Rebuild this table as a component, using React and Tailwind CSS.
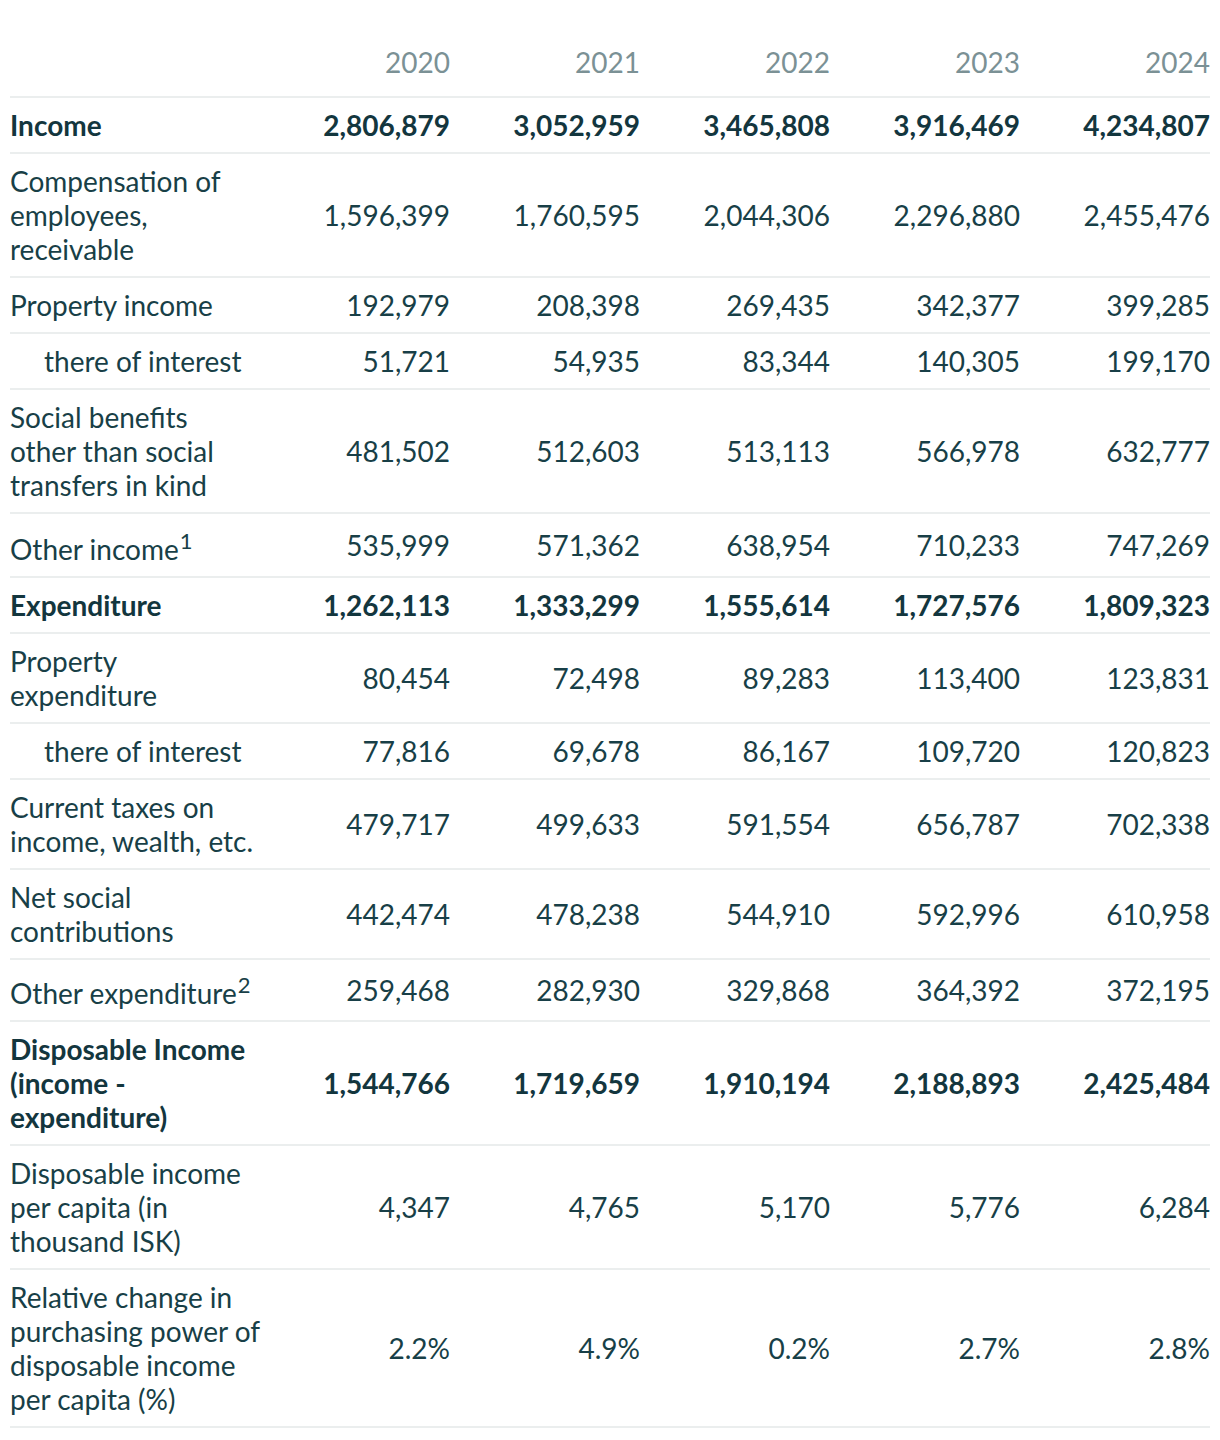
import React from 'react';

const years = ['2020', '2021', '2022', '2023', '2024'];

const rows = [
  { label: 'Income', bold: true, values: ['2,806,879', '3,052,959', '3,465,808', '3,916,469', '4,234,807'] },
  { label: 'Compensation of employees, receivable', values: ['1,596,399', '1,760,595', '2,044,306', '2,296,880', '2,455,476'] },
  { label: 'Property income', values: ['192,979', '208,398', '269,435', '342,377', '399,285'] },
  { label: 'there of interest', indent: true, values: ['51,721', '54,935', '83,344', '140,305', '199,170'] },
  { label: 'Social benefits other than social transfers in kind', values: ['481,502', '512,603', '513,113', '566,978', '632,777'] },
  { label: 'Other income', note: '1', top: 'pt-[18px]', values: ['535,999', '571,362', '638,954', '710,233', '747,269'] },
  { label: 'Expenditure', bold: true, values: ['1,262,113', '1,333,299', '1,555,614', '1,727,576', '1,809,323'] },
  { label: 'Property expenditure', values: ['80,454', '72,498', '89,283', '113,400', '123,831'] },
  { label: 'there of interest', indent: true, values: ['77,816', '69,678', '86,167', '109,720', '120,823'] },
  { label: 'Current taxes on income, wealth, etc.', values: ['479,717', '499,633', '591,554', '656,787', '702,338'] },
  { label: 'Net social contributions', values: ['442,474', '478,238', '544,910', '592,996', '610,958'] },
  { label: 'Other expenditure', note: '2', top: 'pt-[16px]', values: ['259,468', '282,930', '329,868', '364,392', '372,195'] },
  { label: 'Disposable Income (income - expenditure)', bold: true, values: ['1,544,766', '1,719,659', '1,910,194', '2,188,893', '2,425,484'] },
  { label: 'Disposable income per capita (in thousand ISK)', values: ['4,347', '4,765', '5,170', '5,776', '6,284'] },
  { label: 'Relative change in purchasing power of disposable income per capita (%)', values: ['2.2%', '4.9%', '0.2%', '2.7%', '2.8%'] },
];

export default function App() {
  return (
    <div className="bg-white px-[10px] pt-[29px] pb-4 text-[#183f47]" style={{ fontFamily: 'Lato, "Open Sans", sans-serif' }}>
      <table className="w-[1200px] table-fixed border-collapse text-[28px] leading-[34px]">
        <colgroup>
          <col className="w-[250px]" />
          {years.map((y) => <col key={y} className="w-[190px]" />)}
        </colgroup>
        <thead>
          <tr className="border-b-2 border-[#ebeeee]">
            <th />
            {years.map((y) => (
              <th key={y} className="pt-[16px] pb-[17px] text-right font-normal text-[#7b9195]">{y}</th>
            ))}
          </tr>
        </thead>
        <tbody>
          {rows.map((r, i) => (
            <tr key={i} className="border-b-2 border-[#ebeeee]">
              <td className={`${r.top || 'pt-[10px]'} pb-[10px] align-middle ${r.indent ? 'pl-[34px]' : ''} ${r.bold ? 'font-bold text-[#13363e]' : ''}`}>
                {r.label}
                {r.note && <sup className="ml-[1px] text-[22px]">{r.note}</sup>}
              </td>
              {r.values.map((v, j) => (
                <td key={j} className={`py-[10px] text-right align-middle ${r.bold ? 'font-bold text-[#13363e]' : ''}`}>{v}</td>
              ))}
            </tr>
          ))}
        </tbody>
      </table>
    </div>
  );
}
